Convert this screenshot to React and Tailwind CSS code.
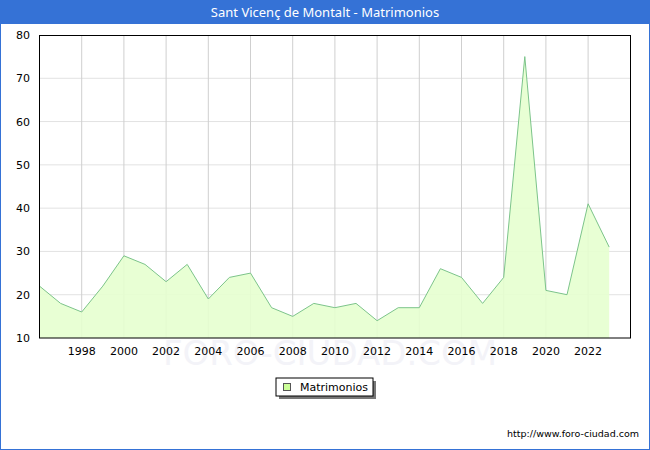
const data=[22,18,16,22,29,27,23,27,19,24,25,17,15,18,17,18,14,17,17,26,24,18,24,75,21,20,41,31];
const X=y=>39.5+(y-1996)*21.1;
const Y=v=>35+(80-v)*(303/70);
const years=[1998,2000,2002,2004,2006,2008,2010,2012,2014,2016,2018,2020,2022];
export default function App(){
  const pts=data.map((v,i)=>`${X(1996+i).toFixed(1)},${Y(v).toFixed(1)}`).join(' ');
  const area=`${X(1996)},338 ${pts} ${X(2023)},338`;
  const ff='"DejaVu Sans",Verdana,sans-serif';
  return(
  <div className="w-[650px] h-[450px] flex flex-col border border-[#3572d6] bg-white font-['DejaVu_Sans',Verdana,sans-serif]">
    <div className="h-[23px] bg-[#3572d6] text-white text-[13px] flex items-center justify-center shrink-0">Sant Vicenç de Montalt - Matrimonios</div>
    <div className="flex-1 overflow-hidden">
      <svg width="648" height="425" fontFamily={ff}>
        <g transform="translate(-1,-24)">
        <text x="330" y="365" fontSize="34" fill="#f3f3f8" textAnchor="middle">FORO-CIUDAD.COM</text>
        {[20,30,40,50,60,70].map(v=><line key={v} x1="39" x2="630" y1={Y(v)} y2={Y(v)} stroke="#e2e2e2"/>)}
        {years.map(y=><line key={y} x1={X(y)} x2={X(y)} y1="35" y2="338" stroke="#cfcfcf"/>)}
        <polygon points={area} fill="#e5ffcf" fillOpacity="0.9"/>
        <polyline points={pts} fill="none" stroke="#7cc48a" strokeWidth="1"/>
        <rect x="39.5" y="35.5" width="591" height="302.5" fill="none" stroke="#000"/>
        {[10,20,30,40,50,60,70,80].map(v=><text key={v} x="30" y={Y(v)+4} fontSize="11" textAnchor="end">{v}</text>)}
        {years.map(y=><text key={y} x={X(y)} y="355" fontSize="11" textAnchor="middle">{y}</text>)}
        <rect x="279" y="381" width="97" height="18" fill="#777"/>
        <rect x="276" y="378" width="97" height="18" fill="#fff" stroke="#000"/>
        <rect x="283.5" y="383.5" width="7" height="7" fill="#ccff99" stroke="#555"/>
        <text x="300" y="391" fontSize="11">Matrimonios</text>
        <text x="639" y="437" fontSize="9.5" textAnchor="end">http://www.foro-ciudad.com</text>
        </g>
      </svg>
    </div>
  </div>);
}
